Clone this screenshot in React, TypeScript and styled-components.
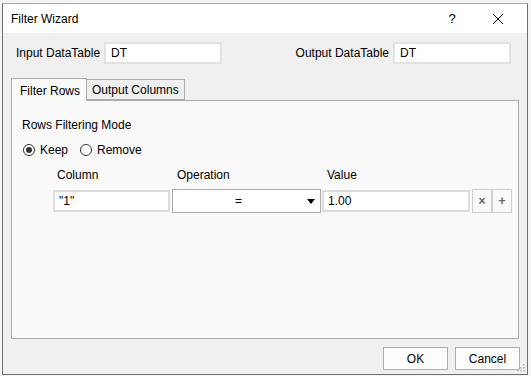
import React from "react";
import styled, { createGlobalStyle } from "styled-components";

const Global = createGlobalStyle`
  html, body { margin: 0; padding: 0; background: #f4f4f4; }
  body { font-family: "Liberation Sans", Arial, sans-serif; font-size: 12px; color: #000; }
  * { box-sizing: border-box; }
`;

const Window = styled.div`
  position: relative;
  width: 526px;
  height: 372px;
  margin: 3px 0 0 2px;
  border: 1px solid #6f6f6f;
  border-top-color: #a9a9a9;
  display: flex;
  flex-direction: column;
  background: #f0f0f0;
`;

const TitleBar = styled.div`
  height: 29px;
  background: #ffffff;
  display: flex;
  align-items: center;
  padding: 0 6px 0 8px;
  flex-shrink: 0;
`;

const Title = styled.div`
  flex: 1;
  font-size: 12px;
`;

const TitleButton = styled.div`
  width: 46px;
  height: 29px;
  display: flex;
  align-items: center;
  justify-content: center;
  font-size: 13px;
`;

const Body = styled.div`
  flex: 1;
  display: flex;
  flex-direction: column;
  padding: 9px 8px 4px 8px;
`;

const TopRow = styled.div`
  display: flex;
  justify-content: space-between;
  padding: 0 8px 0 5px;
  height: 22px;
`;

const Field = styled.div`
  display: flex;
  align-items: center;
  gap: 4px;
`;

const TextBox = styled.div<{ $w: number }>`
  width: ${(p) => p.$w}px;
  height: 22px;
  background: #fff;
  border: 2px solid #e1e1e1;
  display: flex;
  align-items: center;
  padding-left: 5px;
`;

const TabStrip = styled.div`
  display: flex;
  align-items: flex-end;
  margin-top: 14px;
  height: 22px;
  position: relative;
  z-index: 1;
`;

const Tab = styled.div<{ $active?: boolean }>`
  height: ${(p) => (p.$active ? 23 : 21)}px;
  margin-bottom: ${(p) => (p.$active ? -1 : 0)}px;
  border: 1px solid #acacac;
  border-bottom: ${(p) => (p.$active ? "none" : "1px solid #acacac")};
  border-left: ${(p) => (p.$active ? "1px solid #acacac" : "none")};
  background: ${(p) => (p.$active ? "#f9f9f9" : "#f0f0f0")};
  padding: ${(p) => (p.$active ? "2px 6px 0 8px" : "1px 5px 0 5px")};
  display: flex;
  align-items: center;
  line-height: 16px;
`;

const Panel = styled.div`
  flex: 1;
  border: 1px solid #acacac;
  background: #f9f9f9;
  padding: 16px 10px 0 10px;
  display: flex;
  flex-direction: column;
`;

const SectionTitle = styled.div`
  line-height: 16px;
`;

const RadioRow = styled.div`
  display: flex;
  align-items: center;
  margin-top: 9px;
  height: 16px;
  padding-left: 1px;
`;

const RadioOption = styled.label`
  display: flex;
  align-items: center;
  gap: 5px;
  margin-right: 12px;
`;

const RadioCircle = styled.span<{ $checked?: boolean }>`
  width: 12px;
  height: 12px;
  border-radius: 50%;
  border: 1px solid #333;
  background: #fff;
  display: flex;
  align-items: center;
  justify-content: center;
  &::after {
    content: "";
    width: 6px;
    height: 6px;
    border-radius: 50%;
    background: ${(p) => (p.$checked ? "#333" : "transparent")};
  }
`;

const Grid = styled.div`
  display: grid;
  grid-template-columns: 117px 151px 149px 22px 20px;
  margin-left: 31px;
  margin-top: 9px;
`;

const HeaderCell = styled.div<{ $pl: number }>`
  line-height: 16px;
  padding-left: ${(p) => p.$pl}px;
  margin-bottom: 6px;
`;

const CellInput = styled.div<{ $ml?: number }>`
  height: 22px;
  margin-left: ${(p) => p.$ml || 0}px;
  margin-top: 1px;
  background: #fff;
  border: 2px solid #dcdcdc;
  display: flex;
  align-items: center;
  padding-left: 4px;
`;

const Select = styled.div`
  height: 24px;
  margin-left: 2px;
  background: #fff;
  border: 1px solid #acacac;
  display: flex;
  align-items: center;
  justify-content: center;
  padding-right: 16px;
  position: relative;
`;

const Arrow = styled.span`
  position: absolute;
  right: 5px;
  top: 9px;
  width: 0;
  height: 0;
  border-left: 4px solid transparent;
  border-right: 4px solid transparent;
  border-top: 5px solid #000;
`;

const SmallButton = styled.div<{ $ml?: number }>`
  height: 24px;
  width: 20px;
  margin-left: ${(p) => p.$ml || 0}px;
  border: 1px solid #cfcfcf;
  background: #f9f9f9;
  display: flex;
  align-items: center;
  justify-content: center;
  color: #666;
  font-size: 12px;
  font-weight: bold;
`;

const ButtonRow = styled.div`
  display: flex;
  justify-content: flex-end;
  gap: 7px;
  margin-top: 8px;
  margin-right: -1px;
`;

const Button = styled.div`
  width: 65px;
  height: 23px;
  background: #fdfdfd;
  border: 1px solid #adadad;
  display: flex;
  align-items: center;
  justify-content: center;
`;

const Grip = styled.svg`
  position: absolute;
  right: 2px;
  bottom: 2px;
`;

export default function App() {
  return (
    <>
      <Global />
      <Window>
        <TitleBar>
          <Title>Filter Wizard</Title>
          <TitleButton>?</TitleButton>
          <TitleButton>
            <svg width="12" height="12" viewBox="0 0 12 12">
              <path d="M1 1 L11 11 M11 1 L1 11" stroke="#000" strokeWidth="1" />
            </svg>
          </TitleButton>
        </TitleBar>
        <Body>
          <TopRow>
            <Field>
              <span>Input DataTable</span>
              <TextBox $w={118}>DT</TextBox>
            </Field>
            <Field>
              <span>Output DataTable</span>
              <TextBox $w={118}>DT</TextBox>
            </Field>
          </TopRow>
          <TabStrip>
            <Tab $active>Filter Rows</Tab>
            <Tab>Output Columns</Tab>
          </TabStrip>
          <Panel>
            <SectionTitle>Rows Filtering Mode</SectionTitle>
            <RadioRow>
              <RadioOption>
                <RadioCircle $checked />
                Keep
              </RadioOption>
              <RadioOption>
                <RadioCircle />
                Remove
              </RadioOption>
            </RadioRow>
            <Grid>
              <HeaderCell $pl={4}>Column</HeaderCell>
              <HeaderCell $pl={7}>Operation</HeaderCell>
              <HeaderCell $pl={6}>Value</HeaderCell>
              <div />
              <div />
              <CellInput>"1"</CellInput>
              <Select>
                =
                <Arrow />
              </Select>
              <CellInput $ml={1}>1.00</CellInput>
              <SmallButton $ml={2}>×</SmallButton>
              <SmallButton>+</SmallButton>
            </Grid>
          </Panel>
          <ButtonRow>
            <Button>OK</Button>
            <Button>Cancel</Button>
          </ButtonRow>
        </Body>
        <Grip width="10" height="10" viewBox="0 0 10 10">
          {[
            [8, 2],
            [8, 5],
            [5, 5],
            [8, 8],
            [5, 8],
            [2, 8],
          ].map(([x, y], i) => (
            <rect key={i} x={x} y={y} width="1.5" height="1.5" fill="#b0b0b0" />
          ))}
        </Grip>
      </Window>
    </>
  );
}
